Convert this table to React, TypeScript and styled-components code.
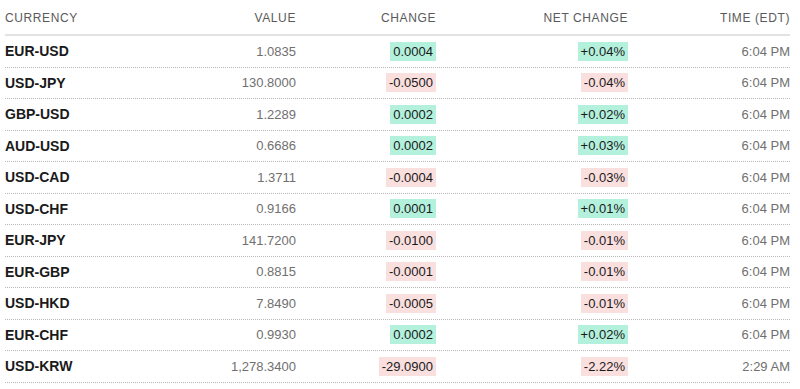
import React from 'react';
import styled, { createGlobalStyle } from 'styled-components';

const GlobalStyle = createGlobalStyle`
  body {
    margin: 0;
    background: #fff;
    font-family: 'Liberation Sans', Arial, sans-serif;
  }
`;

const Table = styled.div`
  width: 785px;
  margin-left: 5px;
`;

const Row = styled.div<{ header?: boolean }>`
  display: grid;
  grid-template-columns: 150px 141px 140px 192px 162px;
  align-items: center;
  height: ${({ header }) => (header ? '34px' : '30.5px')};
  border-bottom: ${({ header }) => (header ? '2px solid #e2e2e2' : '1px dotted #b8b8b8')};
`;

const HeadCell = styled.div<{ left?: boolean }>`
  font-size: 12px;
  letter-spacing: 0.6px;
  color: #5a5a5a;
  text-align: ${({ left }) => (left ? 'left' : 'right')};
  padding-top: 2px;
`;

const Name = styled.div`
  font-size: 14px;
  font-weight: bold;
  color: #1a1a1a;
`;

const Plain = styled.div`
  font-size: 13px;
  color: #707070;
  text-align: right;
`;

const BadgeCell = styled.div`
  text-align: right;
`;

const Badge = styled.span<{ up: boolean }>`
  display: inline-block;
  font-size: 13px;
  line-height: 19px;
  padding: 0 3px;
  color: #1a1a1a;
  background: ${({ up }) => (up ? '#b3f1dd' : '#fadfdf')};
`;

const rows = [
  ['EUR-USD', '1.0835', '0.0004', '+0.04%', '6:04 PM'],
  ['USD-JPY', '130.8000', '-0.0500', '-0.04%', '6:04 PM'],
  ['GBP-USD', '1.2289', '0.0002', '+0.02%', '6:04 PM'],
  ['AUD-USD', '0.6686', '0.0002', '+0.03%', '6:04 PM'],
  ['USD-CAD', '1.3711', '-0.0004', '-0.03%', '6:04 PM'],
  ['USD-CHF', '0.9166', '0.0001', '+0.01%', '6:04 PM'],
  ['EUR-JPY', '141.7200', '-0.0100', '-0.01%', '6:04 PM'],
  ['EUR-GBP', '0.8815', '-0.0001', '-0.01%', '6:04 PM'],
  ['USD-HKD', '7.8490', '-0.0005', '-0.01%', '6:04 PM'],
  ['EUR-CHF', '0.9930', '0.0002', '+0.02%', '6:04 PM'],
  ['USD-KRW', '1,278.3400', '-29.0900', '-2.22%', '2:29 AM'],
];

export default function App() {
  return (
    <>
      <GlobalStyle />
      <Table>
        <Row header>
          <HeadCell left>CURRENCY</HeadCell>
          <HeadCell>VALUE</HeadCell>
          <HeadCell>CHANGE</HeadCell>
          <HeadCell>NET CHANGE</HeadCell>
          <HeadCell>TIME (EDT)</HeadCell>
        </Row>
        {rows.map(([name, value, change, net, time]) => {
          const up = !change.startsWith('-');
          return (
            <Row key={name}>
              <Name>{name}</Name>
              <Plain>{value}</Plain>
              <BadgeCell>
                <Badge up={up}>{change}</Badge>
              </BadgeCell>
              <BadgeCell>
                <Badge up={up}>{net}</Badge>
              </BadgeCell>
              <Plain>{time}</Plain>
            </Row>
          );
        })}
      </Table>
    </>
  );
}
